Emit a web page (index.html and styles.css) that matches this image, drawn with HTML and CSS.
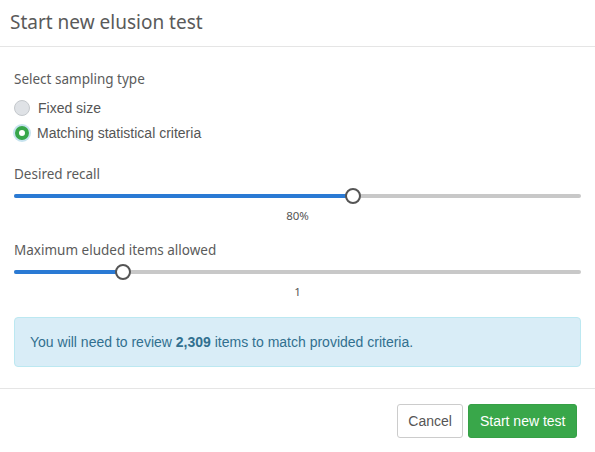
FILE: index.html
```html
<!DOCTYPE html>
<html>
<head>
<meta charset="utf-8">
<link rel="stylesheet" href="styles.css">
</head>
<body>
<div class="modal">
  <div class="modal-header">
    <h4 class="modal-title">Start new elusion test</h4>
  </div>
  <div class="modal-body">
    <div class="field-label">Select sampling type</div>
    <div class="radio-list">
      <div class="radio-row">
        <span class="radio"></span>
        <span class="radio-text">Fixed size</span>
      </div>
      <div class="radio-row">
        <span class="radio checked"></span>
        <span class="radio-text">Matching statistical criteria</span>
      </div>
    </div>

    <div class="field-label spaced">Desired recall</div>
    <div class="slider">
      <div class="track">
        <div class="fill" style="width: 59.8%"></div>
        <div class="thumb" style="left: 59.8%"></div>
      </div>
    </div>
    <div class="slider-value">80%</div>

    <div class="field-label spaced2">Maximum eluded items allowed</div>
    <div class="slider">
      <div class="track">
        <div class="fill" style="width: 19.2%"></div>
        <div class="thumb" style="left: 19.2%"></div>
      </div>
    </div>
    <div class="slider-value">1</div>

    <div class="alert">You will need to review <b>2,309</b> items to match provided criteria.</div>
  </div>
  <div class="modal-footer">
    <button class="btn btn-default">Cancel</button>
    <button class="btn btn-success">Start new test</button>
  </div>
</div>
</body>
</html>
```
FILE: styles.css
```css
html, body {
  margin: 0;
  padding: 0;
  background: #fff;
}
.modal {
  width: 595px;
  height: 452px;
  font-family: "Liberation Sans", Arial, sans-serif;
  color: #555;
}
.modal-header {
  height: 46px;
  border-bottom: 1px solid #e5e5e5;
  display: flex;
  align-items: center;
  padding: 0 10px;
  box-sizing: content-box;
}
.modal-title {
  margin: 0;
  font-family: "Noto Sans", sans-serif;
  font-weight: 400;
  font-size: 19px;
  color: #5a5a5a;
  line-height: 24px;
  padding-bottom: 2px;
}
.modal-body {
  padding: 22px 14px 21px 14px;
}
.field-label {
  font-family: "Noto Sans", sans-serif;
  font-size: 13.5px;
  line-height: 20px;
  color: #5b5b5b;
}
.field-label.spaced {
  margin-top: 21px;
}
.field-label.spaced2 {
  margin-top: 16px;
}
.radio-list {
  margin-top: 9px;
  display: flex;
  flex-direction: column;
  gap: 5px;
}
.radio-row {
  display: flex;
  align-items: center;
  height: 20px;
  gap: 8px;
}
.radio {
  width: 14px;
  height: 14px;
  border-radius: 50%;
  border: 1px solid #c4c8cc;
  background: #dfe2e6;
  display: inline-block;
  box-sizing: content-box;
}
.radio.checked {
  background: #fff;
  border: 4px solid #37a64a;
  width: 6px;
  height: 6px;
  margin-left: 1px;
  box-shadow: 0 0 0 2px #c7e3ef;
}
.radio-text {
  font-family: "Liberation Sans", Arial, sans-serif;
  font-size: 14px;
  color: #555;
}
.slider {
  height: 24px;
  display: flex;
  align-items: center;
}
.track {
  position: relative;
  width: 100%;
  height: 4px;
  border-radius: 2px;
  background: #c8c8c8;
}
.fill {
  height: 4px;
  border-radius: 2px;
  background: #2a7ad4;
}
.thumb {
  position: absolute;
  top: 50%;
  width: 12px;
  height: 12px;
  border: 2px solid #555;
  border-radius: 50%;
  background: #fff;
  transform: translate(-50%, -50%);
}
.slider-value {
  text-align: center;
  font-family: "Noto Sans", sans-serif;
  font-size: 11.5px;
  line-height: 16px;
  color: #555;
}
.alert {
  margin-top: 17px;
  padding: 14px 15px;
  line-height: 20px;
  font-size: 14px;
  color: #31708f;
  background: #d9edf7;
  border: 1px solid #bce8f1;
  border-radius: 4px;
}
.modal-footer {
  border-top: 1px solid #e5e5e5;
  padding: 15px 18px;
  display: flex;
  justify-content: flex-end;
  gap: 5px;
}
.btn {
  font-family: "Liberation Sans", Arial, sans-serif;
  font-size: 14px;
  height: 34px;
  padding: 0 10.5px;
  border-radius: 3px;
  border: 1px solid transparent;
  cursor: pointer;
}
.btn-default {
  background: #fff;
  border-color: #ccc;
  color: #555;
}
.btn-success {
  background: #39a74a;
  border-color: #36a046;
  color: #fff;
}
```
